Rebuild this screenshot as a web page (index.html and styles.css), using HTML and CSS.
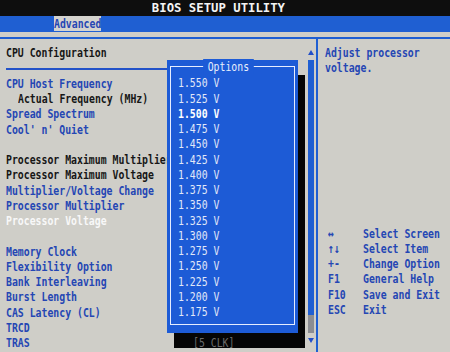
FILE: index.html
```
<!DOCTYPE html>
<html lang="en">
<head>
<meta charset="utf-8">
<title>BIOS SETUP UTILITY</title>
<link rel="stylesheet" href="styles.css">
</head>
<body>
<div class="screen">
  <header class="topbar"><span class="t title">BIOS SETUP UTILITY</span></header>
  <nav class="tabbar"><span class="tab"><span class="t">Advanced</span></span></nav>
  <main class="frame">
    <section class="left">
      <div class="content">
        <div class="head"><span class="t">CPU Configuration</span></div>
        <div class="rule"></div>
        <ul class="items">
          <li class="row sel"><span class="t">CPU Host Frequency</span></li>
          <li class="row info sub"><span class="t">Actual Frequency (MHz)</span></li>
          <li class="row sel"><span class="t">Spread Spectrum</span></li>
          <li class="row sel"><span class="t">Cool' n' Quiet</span></li>
          <li class="row blank"></li>
          <li class="row info"><span class="t">Processor Maximum Multiplier</span></li>
          <li class="row info"><span class="t">Processor Maximum Voltage</span></li>
          <li class="row sel"><span class="t">Multiplier/Voltage Change</span></li>
          <li class="row sel"><span class="t">Processor Multiplier</span></li>
          <li class="row cur"><span class="t">Processor Voltage</span></li>
          <li class="row blank"></li>
          <li class="row sel"><span class="t">Memory Clock</span></li>
          <li class="row sel"><span class="t">Flexibility Option</span></li>
          <li class="row sel"><span class="t">Bank Interleaving</span></li>
          <li class="row sel"><span class="t">Burst Length</span></li>
          <li class="row sel"><span class="t">CAS Latency (CL)</span></li>
          <li class="row sel"><span class="t">TRCD</span></li>
          <li class="row sel"><span class="t">TRAS</span><span class="t val">[5 CLK]</span></li>
        </ul>
      </div>
      <div class="scroll">
        <svg class="arrow up" width="6" height="5" viewBox="0 0 6 5"><path d="M3 0 L6 5 L0 5 Z" fill="#2350c8"/></svg>
        <div class="track"><div class="thumb"></div></div>
        <svg class="arrow down" width="6" height="5" viewBox="0 0 6 5"><path d="M0 0 L6 0 L3 5 Z" fill="#2350c8"/></svg>
      </div>
    </section>
    <aside class="right">
      <div class="help"><span class="t">Adjust processor
voltage.</span></div>
      <ul class="keys">
        <li><span class="t">↔</span><span class="t">Select Screen</span></li>
        <li><span class="t">↑↓</span><span class="t">Select Item</span></li>
        <li><span class="t">+-</span><span class="t">Change Option</span></li>
        <li><span class="t">F1</span><span class="t">General Help</span></li>
        <li><span class="t">F10</span><span class="t">Save and Exit</span></li>
        <li><span class="t">ESC</span><span class="t">Exit</span></li>
      </ul>
    </aside>
  </main>

  <div class="popup">
    <div class="opt-frame">
      <div class="opt-title"><span class="t">Options</span></div>
      <ul class="opt-list">
        <li><span class="t">1.550 V</span></li>
        <li><span class="t">1.525 V</span></li>
        <li class="on"><span class="t">1.500 V</span></li>
        <li><span class="t">1.475 V</span></li>
        <li><span class="t">1.450 V</span></li>
        <li><span class="t">1.425 V</span></li>
        <li><span class="t">1.400 V</span></li>
        <li><span class="t">1.375 V</span></li>
        <li><span class="t">1.350 V</span></li>
        <li><span class="t">1.325 V</span></li>
        <li><span class="t">1.300 V</span></li>
        <li><span class="t">1.275 V</span></li>
        <li><span class="t">1.250 V</span></li>
        <li><span class="t">1.225 V</span></li>
        <li><span class="t">1.200 V</span></li>
        <li><span class="t">1.175 V</span></li>
      </ul>
    </div>
  </div>
</div>
</body>
</html>
```
FILE: styles.css
```
html, body {
  margin: 0;
  padding: 0;
  background: #cfcec8;
}

.screen {
  position: relative;
  width: 450px;
  height: 352px;
  overflow: hidden;
  background: #cfcec8;
  display: flex;
  flex-direction: column;
  font-family: "DejaVu Sans Mono", "Liberation Mono", monospace;
  font-size: 13px;
  font-weight: bold;
  line-height: 15.25px;
}

ul {
  list-style: none;
  margin: 0;
  padding: 0;
}

.t {
  display: inline-block;
  white-space: pre;
  transform: scaleX(0.756);
  transform-origin: 0 50%;
}

/* top title bar */
.topbar {
  height: 16px;
  line-height: 16px;
  background: #0e0e0e;
  color: #f4f4f4;
  text-align: center;
  padding-right: 13px;
  flex: none;
}
.topbar .t {
  transform: scaleX(0.945);
  transform-origin: 50% 50%;
}

/* tab bar */
.tabbar {
  height: 16px;
  background: #1f5fd2;
  padding-left: 54px;
  display: flex;
  flex: none;
}
.tab {
  width: 47px;
  height: 15px;
  line-height: 15px;
  background: #d4d3ce;
  color: #2446b4;
  overflow: hidden;
}

/* main frame */
.frame {
  flex: 1;
  margin-top: 5px;
  border-top: 2px solid #1f5fd2;
  display: flex;
  min-height: 0;
}

.left {
  width: 318px;
  box-sizing: border-box;
  border-right: 2px solid #1f5fd2;
  display: flex;
  flex: none;
}

.content {
  flex: 1;
  min-width: 0;
  padding-top: 6px;
}

.head {
  padding-left: 6px;
  color: #161616;
  height: 15.25px;
}

.rule {
  height: 2px;
  background: #2352c8;
  margin: 8px 12px 0 6px;
}

.items {
  margin-top: 5.5px;
}

.row {
  display: grid;
  grid-template-columns: 187px auto;
  padding-left: 6px;
  height: 15.25px;
}
.row.sub {
  padding-left: 18px;
}
.sel { color: #2446b4; }
.info { color: #161616; }
.cur { color: #f8f8f8; }

.val {
  position: relative;
  z-index: 3;
  color: #6c6c6c;
  font-weight: normal;
}

/* scrollbar */
.scroll {
  width: 6px;
  margin-right: 2px;
  display: flex;
  flex-direction: column;
  align-items: center;
}
.arrow.up {
  margin: 11px 0 5px;
}
.track {
  height: 273px;
  width: 6px;
  background: #1f5fd2;
  display: flex;
  flex-direction: column;
  justify-content: flex-end;
}
.thumb {
  height: 18px;
  background: #8b8d92;
}
.arrow.down {
  margin-top: 5px;
}

/* right help panel */
.right {
  flex: 1;
  display: flex;
  flex-direction: column;
  padding: 6px 0 35px 7px;
  color: #2446b4;
}

.keys {
  margin-top: auto;
}
.keys li {
  display: grid;
  grid-template-columns: 35px auto;
  padding-left: 3px;
  height: 15.25px;
}

/* options popup */
.popup {
  position: absolute;
  left: 167px;
  top: 60px;
  width: 131px;
  box-sizing: border-box;
  padding: 6px 3px 8px 3px;
  background: #1d5bd6;
  box-shadow: 7px 15px 0 #050505;
  z-index: 2;
  color: #e2e8f8;
  font-weight: normal;
}

.opt-frame {
  border: 1px solid #e6edff;
  padding-bottom: 5px;
}

.opt-title {
  margin-top: -8px;
  height: 15.25px;
  text-align: center;
  padding-right: 8px;
}
.opt-title .t {
  background: #1d5bd6;
  padding: 0 6px;
  transform-origin: 50% 50%;
  color: #e8eefc;
}

.opt-list {
  padding-top: 1px;
}
.opt-list li {
  padding-left: 7px;
  height: 15.25px;
}
.opt-list li.on {
  color: #ffffff;
  font-weight: bold;
}
```
